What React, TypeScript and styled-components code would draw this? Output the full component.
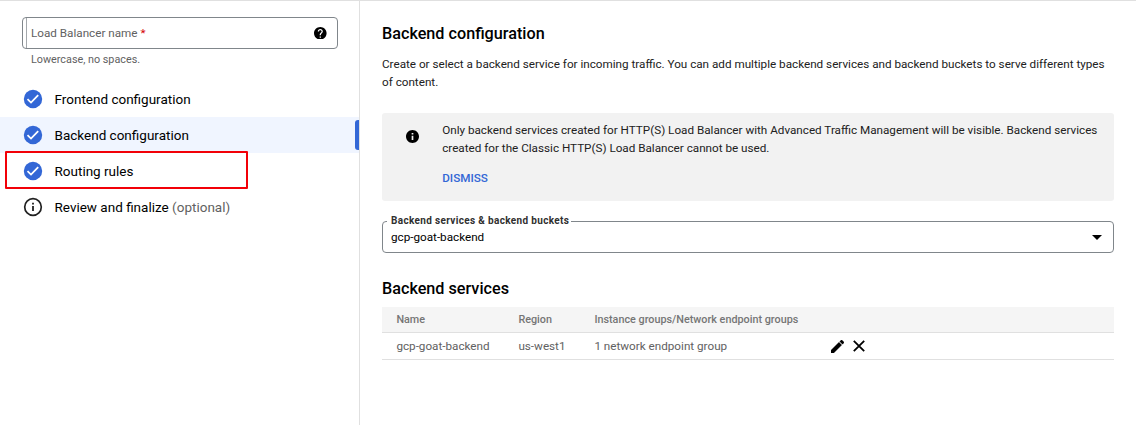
import React from 'react';
import styled, { createGlobalStyle } from 'styled-components';

const GlobalStyle = createGlobalStyle`
  *, *::before, *::after { box-sizing: border-box; }
  body {
    margin: 0;
    background: #fff;
    color: #000;
    font-family: Roboto, 'Liberation Sans', sans-serif;
    font-size: 11.7px;
  }
`;

const Page = styled.div`
  display: flex;
  height: 425px;
  border-top: 1px solid #e0e0e0;
  overflow: hidden;
`;

const Sidebar = styled.aside`
  flex: none;
  width: 360px;
  border-right: 1px solid #e0e0e0;
  padding-top: 16px;
`;

const NameField = styled.div`
  display: flex;
  align-items: center;
  justify-content: space-between;
  height: 32px;
  margin: 0 21px 0 22px;
  padding: 0 10.4px 0 3px;
  border: 1px solid #80868b;
  border-radius: 4px;
`;

const FieldLabel = styled.label`
  display: flex;
  align-items: center;
  height: 30px;
  padding-left: 4px;
  border-left: 1px solid #a4a8ac;
  color: #616161;
  white-space: pre;
`;

const Required = styled.span`
  color: #d50000;
`;

const Hint = styled.p`
  margin: 2px 0 0 31px;
  height: 30px;
  line-height: 18px;
  font-size: 10.8px;
  color: #616161;
`;

const Steps = styled.ul`
  list-style: none;
  margin: 0;
  padding: 0;
`;

const Step = styled.li<{ $active?: boolean }>`
  display: flex;
  align-items: center;
  position: relative;
  height: 36px;
  padding-left: 23px;
  gap: 11.5px;
  font-size: 13.5px;
  background: ${(p) => (p.$active ? '#f0f5ff' : 'transparent')};
`;

const ActiveMark = styled.span`
  width: 4px;
  height: 30px;
  margin-left: auto;
  border-radius: 3px 0 0 3px;
  background: #3367d6;
`;

const Highlight = styled.span`
  position: absolute;
  left: 5px;
  top: -2px;
  width: 243px;
  height: 38px;
  border: 2px solid #f20008;
  border-radius: 1px;
`;

const Optional = styled.span`
  color: #616161;
`;

const Main = styled.main`
  flex: 1;
  min-width: 0;
  padding: 21px 22px 0;
`;

const Heading = styled.h2`
  margin: 0;
  height: 24px;
  line-height: 24px;
  font-size: 16.2px;
  font-weight: 500;
`;

const Intro = styled.p`
  margin: 9px 0 0;
  line-height: 18px;
  color: #212121;
`;

const Notice = styled.section`
  display: flex;
  height: 88px;
  margin-top: 22px;
  padding: 8px 12px 0 24px;
  border-radius: 3px;
  background: #f2f2f2;
  color: #212121;
`;

const NoticeIcon = styled.div`
  flex: none;
  width: 36.2px;
  padding-top: 8.5px;
  line-height: 0;
`;

const NoticeText = styled.p`
  margin: 0;
  line-height: 18px;
`;

const Dismiss = styled.button`
  display: block;
  margin: 12px 0 0;
  padding: 0;
  border: 0;
  background: none;
  color: #3367d6;
  font: 500 11.7px/18px Roboto, sans-serif;
`;

const Select = styled.fieldset`
  display: flex;
  align-items: center;
  justify-content: space-between;
  height: 38px;
  margin: 14px 0 0;
  padding: 0 11px 5px 8px;
  border: 1px solid #80868b;
  border-radius: 4px;
`;

const Legend = styled.legend`
  height: 12px;
  margin-left: -4px;
  padding: 0 2px 0 4px;
  line-height: 12px;
  font-size: 10px;
  font-weight: 700;
  letter-spacing: 0.34px;
  color: #303030;
`;

const ServicesHeading = styled(Heading)`
  margin-top: 24px;
`;

const Table = styled.div`
  margin-top: 6px;
`;

const Row = styled.div<{ $head?: boolean }>`
  display: grid;
  grid-template-columns: 122px 76px 236px auto;
  align-items: center;
  height: ${(p) => (p.$head ? 26 : 27)}px;
  padding-left: 14.4px;
  border-bottom: 1px solid #e0e0e0;
  color: ${(p) => (p.$head ? '#757575' : '#616161')};
  font-size: ${(p) => (p.$head ? 10.8 : 11.7)}px;
  font-weight: ${(p) => (p.$head ? 500 : 400)};
  background: ${(p) => (p.$head ? '#f5f5f5' : '#fff')};
`;

const Actions = styled.div`
  display: flex;
  align-items: center;
  gap: 9px;
  padding-left: 1px;
`;

const CheckIcon = () => (
  <svg width="20" height="20" viewBox="0 0 20 20">
    <circle cx="10" cy="10" r="9.2" fill="#3367d6" />
    <path d="M4.5 10.2 8 13.6 15.2 6.2" fill="none" stroke="#fff" strokeWidth="1.8" />
  </svg>
);

const OutlineInfoIcon = () => (
  <svg width="20" height="20" viewBox="0 0 20 20">
    <circle cx="10" cy="10" r="8.3" fill="none" stroke="#212121" strokeWidth="1.7" />
    <path d="M9.1 9.1h1.8v5H9.1zM9.1 5.8h1.8v1.8H9.1z" fill="#212121" />
  </svg>
);

const HelpIcon = () => (
  <svg width="12.6" height="12.6" viewBox="2 2 20 20">
    <path d="M12 2C6.48 2 2 6.48 2 12s4.48 10 10 10 10-4.48 10-10S17.52 2 12 2zm1 17h-2v-2h2v2zm2.07-7.75-.9.92C13.45 12.9 13 13.5 13 15h-2v-.5c0-1.1.45-2.1 1.17-2.83l1.24-1.26c.37-.36.59-.86.59-1.41 0-1.1-.9-2-2-2s-2 .9-2 2H8c0-2.21 1.79-4 4-4s4 1.79 4 4c0 .88-.36 1.68-.93 2.25z" />
  </svg>
);

const InfoIcon = () => (
  <svg width="13" height="13" viewBox="2 2 20 20">
    <path d="M12 2C6.48 2 2 6.48 2 12s4.48 10 10 10 10-4.48 10-10S17.52 2 12 2zm1.3 15.5h-2.6v-6.7h2.6v6.7zm0-8.5h-2.6V6.5h2.6V9z" />
  </svg>
);

const EditIcon = () => (
  <svg width="13" height="13" viewBox="3 3 18 18">
    <path
      d="M3 17.25V21h3.75L17.81 9.94l-3.75-3.75L3 17.25zM20.71 7.04c.39-.39.39-1.02 0-1.41l-2.34-2.34c-.39-.39-1.02-.39-1.41 0l-1.83 1.83 3.75 3.75 1.83-1.83z"
      stroke="#000"
      strokeWidth="0.5"
    />
  </svg>
);

const CloseIcon = () => (
  <svg width="12" height="12" viewBox="0 0 12 12">
    <path d="M.8 .8 11.2 11.2M11.2 .8 .8 11.2" stroke="#000" strokeWidth="1.8" />
  </svg>
);

const CaretIcon = () => (
  <svg width="10" height="5" viewBox="0 0 10 5">
    <path d="M0 0h10L5 5z" />
  </svg>
);

export default function App() {
  return (
    <Page>
      <GlobalStyle />
      <Sidebar>
        <NameField>
          <FieldLabel>Load Balancer name <Required>*</Required></FieldLabel>
          <HelpIcon />
        </NameField>
        <Hint>Lowercase, no spaces.</Hint>
        <Steps>
          <Step><CheckIcon />Frontend configuration</Step>
          <Step $active><CheckIcon />Backend configuration<ActiveMark /></Step>
          <Step><CheckIcon />Routing rules<Highlight /></Step>
          <Step>
            <OutlineInfoIcon />
            <span>Review and finalize <Optional>(optional)</Optional></span>
          </Step>
        </Steps>
      </Sidebar>
      <Main>
        <Heading>Backend configuration</Heading>
        <Intro>
          Create or select a backend service for incoming traffic. You can add multiple backend
          services and backend buckets to serve different types of content.
        </Intro>
        <Notice>
          <NoticeIcon><InfoIcon /></NoticeIcon>
          <div>
            <NoticeText>
              Only backend services created for HTTP(S) Load Balancer with Advanced Traffic
              Management will be visible. Backend services created for the Classic HTTP(S) Load
              Balancer cannot be used.
            </NoticeText>
            <Dismiss>DISMISS</Dismiss>
          </div>
        </Notice>
        <Select>
          <Legend>Backend services &amp; backend buckets</Legend>
          <span>gcp-goat-backend</span>
          <CaretIcon />
        </Select>
        <ServicesHeading>Backend services</ServicesHeading>
        <Table>
          <Row $head>
            <span>Name</span>
            <span>Region</span>
            <span>Instance groups/Network endpoint groups</span>
          </Row>
          <Row>
            <span>gcp-goat-backend</span>
            <span>us-west1</span>
            <span>1 network endpoint group</span>
            <Actions><EditIcon /><CloseIcon /></Actions>
          </Row>
        </Table>
      </Main>
    </Page>
  );
}
